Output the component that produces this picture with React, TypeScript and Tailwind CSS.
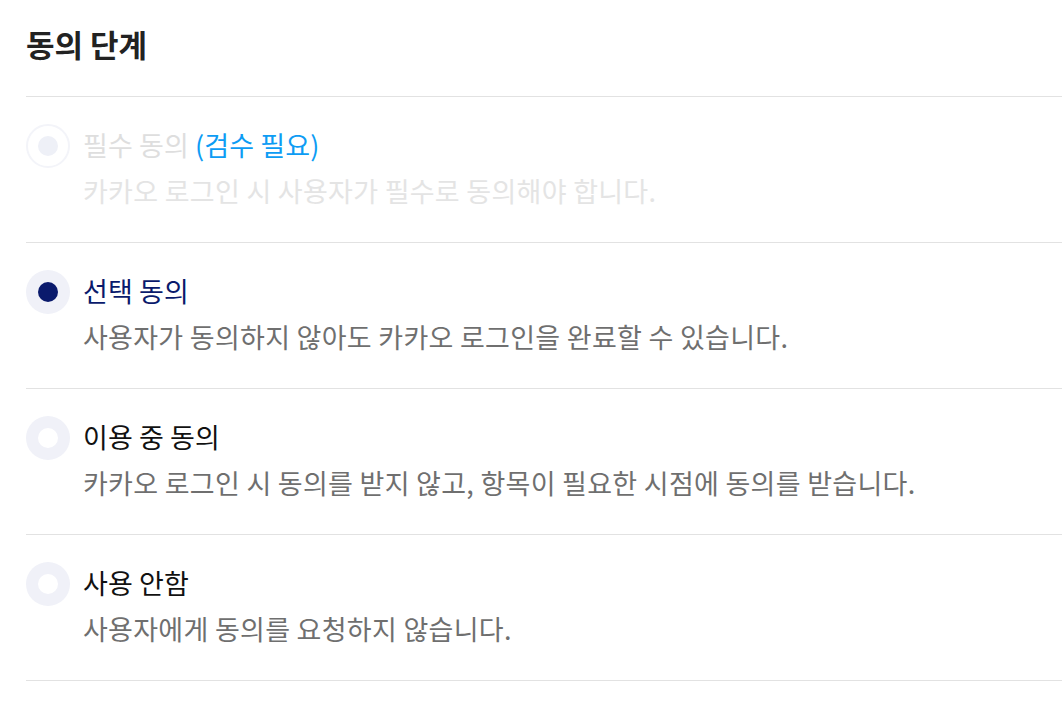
import React, { useState } from "react";

type Option = {
  id: string;
  title: string;
  desc: string;
  disabled?: boolean;
  note?: string;
};

const OPTIONS: Option[] = [
  {
    id: "required",
    title: "필수 동의",
    note: "(검수 필요)",
    desc: "카카오 로그인 시 사용자가 필수로 동의해야 합니다.",
    disabled: true,
  },
  {
    id: "optional",
    title: "선택 동의",
    desc: "사용자가 동의하지 않아도 카카오 로그인을 완료할 수 있습니다.",
  },
  {
    id: "inuse",
    title: "이용 중 동의",
    desc: "카카오 로그인 시 동의를 받지 않고, 항목이 필요한 시점에 동의를 받습니다.",
  },
  {
    id: "none",
    title: "사용 안함",
    desc: "사용자에게 동의를 요청하지 않습니다.",
  },
];

const Radio: React.FC<{ checked: boolean; disabled?: boolean }> = ({ checked, disabled }) => {
  if (disabled) {
    return (
      <span className="flex h-[44px] w-[44px] shrink-0 items-center justify-center rounded-full border-2 border-[#f3f4f9] bg-white">
        <span className="h-[20px] w-[20px] rounded-full bg-[#eef0f7]" />
      </span>
    );
  }
  return (
    <span className="flex h-[44px] w-[44px] shrink-0 items-center justify-center rounded-full bg-[#f0f1f8]">
      <span className={`h-[20px] w-[20px] rounded-full ${checked ? "bg-[#0a1a6c]" : "bg-white"}`} />
    </span>
  );
};

export default function App() {
  const [selected, setSelected] = useState("optional");

  return (
    <div
      className="min-h-screen bg-white pl-[26px]"
      style={{ fontFamily: '"Noto Sans CJK KR", "Noto Sans", sans-serif' }}
    >
      <h1 className="pt-[24px] pb-[32px] text-[31px] leading-[40px] font-bold text-[#222222]">
        동의 단계
      </h1>

      <div className="border-t border-[#e2e2e2]">
        {OPTIONS.map(opt => {
          const checked = selected === opt.id;
          return (
            <label
              key={opt.id}
              onClick={() => !opt.disabled && setSelected(opt.id)}
              className={`flex gap-[13px] border-b border-[#e2e2e2] pt-[27px] pb-[32px] ${opt.disabled ? "cursor-default" : "cursor-pointer"}`}
            >
              <Radio checked={checked} disabled={opt.disabled} />
              <div className="flex flex-col gap-[6px]">
                <p
                  className={`text-[27px] leading-[42px] tracking-[0.1px] ${
                    opt.disabled ? "text-[#dedede]" : checked ? "text-[#0a1a6c]" : "text-[#111111]"
                  }`}
                >
                  {opt.title}
                  {opt.note && <span className="text-[#0d9cf4]"> {opt.note}</span>}
                </p>
                <p
                  className={`text-[27px] leading-[38px] tracking-[0.28px] ${
                    opt.disabled ? "text-[#e4e4e4]" : "text-[#6f6f6f]"
                  }`}
                >
                  {opt.desc}
                </p>
              </div>
            </label>
          );
        })}
      </div>
    </div>
  );
}
